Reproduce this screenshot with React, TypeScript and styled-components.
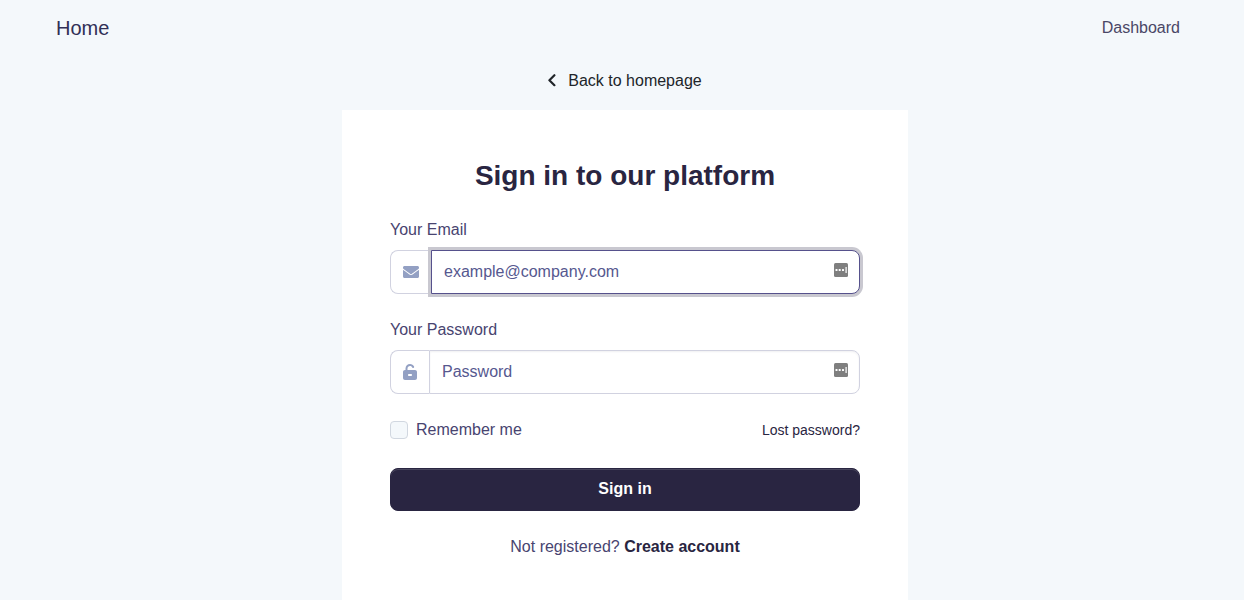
import React, { useState } from "react";
import styled, { createGlobalStyle } from "styled-components";
import { FaEnvelope } from "react-icons/fa";
import { FaUnlockKeyhole } from "react-icons/fa6";

const GlobalStyle = createGlobalStyle`
  *, *::before, *::after { box-sizing: border-box; }
  body {
    margin: 0;
    background: #f4f8fb;
    color: #484470;
    font-family: "Liberation Sans", Arial, sans-serif;
    font-size: 16px;
    line-height: 24px;
  }
  a { text-decoration: none; }
`;

const Navbar = styled.nav`
  display: flex;
  align-items: center;
  justify-content: space-between;
  height: 56px;
  padding: 0 64px 0 56px;
`;

const Brand = styled.a`
  color: #312f56;
  font-size: 20px;
`;

const NavLink = styled.a`
  color: #4a4766;
`;

const Main = styled.main`
  display: flex;
  flex-direction: column;
  align-items: center;
  padding: 13px 0 0 6px;
`;

const BackLink = styled.a`
  display: flex;
  align-items: center;
  gap: 12px;
  margin-bottom: 17px;
  color: #212529;
`;

const Card = styled.section`
  width: 100%;
  max-width: 566px;
  padding: 48px;
  background: #ffffff;
`;

const Title = styled.h1`
  margin: 0 0 24px;
  color: #292541;
  font-size: 28px;
  line-height: 36px;
  text-align: center;
`;

const Form = styled.form`
  display: flex;
  flex-direction: column;
  gap: 24px;
`;

const Field = styled.div`
  display: flex;
  flex-direction: column;
  gap: 8px;
`;

const Label = styled.label`
  color: #484470;
`;

const InputGroup = styled.div`
  position: relative;
  display: flex;
  height: 44px;
`;

const Addon = styled.span`
  display: flex;
  align-items: center;
  padding: 0 12px;
  border: 1px solid #d1d2e0;
  border-right: 0;
  border-radius: 8px 0 0 8px;
  color: #93a0c3;
`;

const LockIcon = styled(FaUnlockKeyhole)`
  width: 14px;
  height: 16px;
`;

const Input = styled.input<{ $active?: boolean }>`
  flex: 1;
  min-width: 0;
  padding: 0 44px 0 12px;
  border: 1px solid ${(p) => (p.$active ? "#56518c" : "#d1d2e0")};
  border-radius: 0 8px 8px 0;
  outline: 0;
  background: #ffffff;
  box-shadow: ${(p) =>
    p.$active ? "0 0 0 3px #c9c8d0" : "inset 0 1px 2px rgba(41, 37, 65, 0.07)"};
  color: #484470;
  font: inherit;

  &::placeholder {
    color: #56588f;
    opacity: 1;
  }
`;

const FillButton = styled.button`
  position: absolute;
  top: 13px;
  right: 12px;
  width: 14px;
  height: 14px;
  padding: 0;
  border: 0;
  background: none;

  svg { display: block; }
`;

const OptionsRow = styled.div`
  display: flex;
  align-items: center;
  justify-content: space-between;
  margin-bottom: 2px;
`;

const CheckLabel = styled.label`
  display: flex;
  align-items: center;
  gap: 8px;
`;

const Checkbox = styled.input`
  appearance: none;
  width: 18px;
  height: 18px;
  margin: 0;
  border: 1px solid #d1d7e0;
  border-radius: 4px;
  background: #f4f8fb;

  &:checked { background: #292541; }
`;

const SmallLink = styled.a`
  color: #292541;
  font-size: 14px;
`;

const SubmitButton = styled.button`
  height: 43px;
  padding: 0 16px 2px;
  border: 1px solid #292541;
  border-radius: 8px;
  background: #292541;
  box-shadow: inset 0 1px 0 rgba(255, 255, 255, 0.15);
  color: #ffffff;
  font: inherit;
  font-weight: 700;
`;

const Register = styled.p`
  margin: 24px 0 0;
  text-align: center;
`;

const StrongLink = styled.a`
  color: #292541;
  font-weight: 700;
`;

const BackIcon = () => (
  <svg width="8" height="16" viewBox="0 0 8 16" aria-hidden="true">
    <path
      d="M6.4 2.2 1.4 7.2l5 5"
      fill="none"
      stroke="currentColor"
      strokeWidth="2.2"
      strokeLinecap="round"
      strokeLinejoin="round"
    />
  </svg>
);

const CredentialsIcon = () => (
  <svg width="14" height="14" viewBox="0 0 14 14" aria-hidden="true">
    <rect width="14" height="14" rx="1.5" fill="#7f7f7f" />
    <rect x="1.5" y="6" width="2" height="2" rx="0.5" fill="#fff" />
    <rect x="4.7" y="6" width="2" height="2" rx="0.5" fill="#fff" />
    <rect x="8" y="6" width="2" height="2" rx="0.5" fill="#fff" />
    <rect x="11.5" y="4" width="1.2" height="6" fill="#fff" />
  </svg>
);

export default function App() {
  const [remember, setRemember] = useState(false);

  return (
    <>
      <GlobalStyle />
      <Navbar>
        <Brand href="#home">Home</Brand>
        <NavLink href="#dashboard">Dashboard</NavLink>
      </Navbar>
      <Main>
        <BackLink href="#home">
          <BackIcon />
          Back to homepage
        </BackLink>
        <Card>
          <Title>Sign in to our platform</Title>
          <Form onSubmit={(e) => e.preventDefault()}>
            <Field>
              <Label htmlFor="email">Your Email</Label>
              <InputGroup>
                <Addon>
                  <FaEnvelope size={16} aria-hidden="true" />
                </Addon>
                <Input id="email" type="email" placeholder="example@company.com" $active />
                <FillButton type="button" aria-label="Fill email">
                  <CredentialsIcon />
                </FillButton>
              </InputGroup>
            </Field>
            <Field>
              <Label htmlFor="password">Your Password</Label>
              <InputGroup>
                <Addon>
                  <LockIcon aria-hidden="true" />
                </Addon>
                <Input id="password" type="password" placeholder="Password" />
                <FillButton type="button" aria-label="Fill password">
                  <CredentialsIcon />
                </FillButton>
              </InputGroup>
            </Field>
            <OptionsRow>
              <CheckLabel htmlFor="remember">
                <Checkbox
                  id="remember"
                  type="checkbox"
                  checked={remember}
                  onChange={(e) => setRemember(e.target.checked)}
                />
                Remember me
              </CheckLabel>
              <SmallLink href="#lost-password">Lost password?</SmallLink>
            </OptionsRow>
            <SubmitButton type="submit">Sign in</SubmitButton>
          </Form>
          <Register>
            Not registered? <StrongLink href="#register">Create account</StrongLink>
          </Register>
        </Card>
      </Main>
    </>
  );
}
